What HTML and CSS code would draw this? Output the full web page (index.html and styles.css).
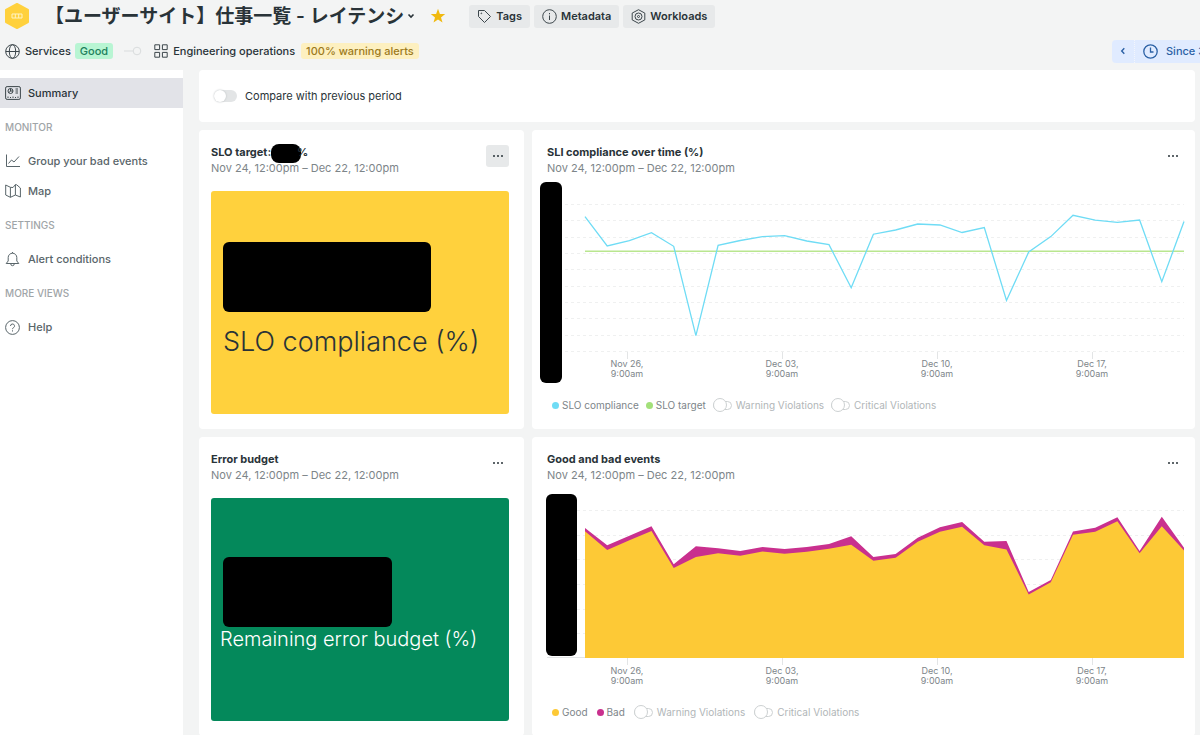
FILE: index.html
```html
<!DOCTYPE html>
<html lang="en">
<head>
    <meta charset="UTF-8">
    <meta name="viewport" content="width=device-width, initial-scale=1.0">
    <title>Service level summary</title>
    <link rel="stylesheet" href="styles.css">
</head>
<body>
    <header class="header">
        <div class="title-row">
            <svg class="logo" width="26" height="26" viewBox="0 0 26 26">
                <path d="M13 1 24 7v12l-11 6L2 19V7z" fill="#ffd13d" stroke="#ffd13d" stroke-width="2" stroke-linejoin="round"/>
                <path d="M8 11h10v4H8zM11.300 11v4M14.700 11v4" fill="none" stroke="#fff3c4"/>
            </svg>
            <h1>【ユーザーサイト】仕事一覧 - レイテンシ</h1>
            <button class="plain caret" aria-label="Open menu">
                <svg width="8" height="6" viewBox="0 0 8 6"><path d="M1.500 1.500 4 4l2.500-2.500" fill="none" stroke="#293338" stroke-width="1.600"/></svg>
            </button>
            <button class="plain star" aria-label="Favorite">
                <svg width="16" height="16" viewBox="0 0 16 16"><path d="M8 .8 9.900 5.900l5.300.2-4.200 3.300 1.500 5.200L8 11.600l-4.500 3 1.500-5.200L.8 6.100l5.300-.2z" fill="#f0b90f"/></svg>
            </button>
            <div class="chips">
                <button class="chip">
                    <svg width="15" height="15" viewBox="0 0 15 15" fill="none" stroke="#3c464b"><path d="M1.500 1.500h6l6 6-6 6-6-6z" stroke-linejoin="round"/><circle cx="4.300" cy="4.300" r=".4"/></svg>
                    Tags
                </button>
                <button class="chip">
                    <svg width="15" height="15" viewBox="0 0 15 15" fill="none" stroke="#3c464b"><circle cx="7.500" cy="7.500" r="6.800"/><path d="M7.500 6.500V11M7.500 4v1.300"/></svg>
                    Metadata
                </button>
                <button class="chip">
                    <svg width="15" height="15" viewBox="0 0 15 15" fill="none" stroke="#3c464b"><path d="m7.500.7 6.300 3.400v6.800l-6.300 3.400-6.300-3.400V4.100z" stroke-linejoin="round"/><circle cx="7.500" cy="7.500" r="3.500"/><circle cx="7.500" cy="7.500" r="1"/></svg>
                    Workloads
                </button>
            </div>
        </div>

        <div class="crumb-row">
            <a class="crumb" href="#">
                <svg width="15" height="15" viewBox="0 0 15 15" fill="none" stroke="#3c464b"><circle cx="7.500" cy="7.500" r="6.800"/><ellipse cx="7.500" cy="7.500" rx="3.200" ry="6.800"/><path d="M.7 7.500h13.600"/></svg>
                Services
            </a>
            <span class="badge good">Good</span>
            <svg class="connector" width="18" height="10" viewBox="0 0 18 10" fill="none" stroke="#d9dcdd"><path d="M0 5h9"/><circle cx="13" cy="5" r="3.800"/></svg>
            <a class="crumb" href="#">
                <svg width="14" height="14" viewBox="0 0 14 14" fill="none" stroke="#3c464b"><path d="M.8.8h4.800v4.800H.8zM8.400.8h4.800v4.800H8.400zM.8 8.400h4.800v4.800H.8zM8.400 8.400h4.800v4.800H8.400z"/></svg>
                Engineering operations
            </a>
            <span class="badge warning">100% warning alerts</span>
            <div class="time-picker">
                <button class="time-prev" aria-label="Previous period">
                    <svg width="6" height="8" viewBox="0 0 6 8"><path d="M4.300 1.200 1.700 4l2.600 2.800" fill="none" stroke="#2b61a5" stroke-width="1.400"/></svg>
                </button>
                <button class="time-range">
                    <svg width="15" height="15" viewBox="0 0 15 15" fill="none" stroke="#2b61a5" stroke-width="1.300"><circle cx="7.500" cy="7.500" r="6.700"/><path d="M7.500 3.500V8h3"/></svg>
                    Since 3
                </button>
            </div>
        </div>
    </header>

    <div class="layout">
        <nav class="sidebar">
            <a class="nav-item active" href="#">
                <svg width="16" height="14" viewBox="0 0 16 14" fill="none" stroke="#3c464b"><rect x=".6" y=".6" width="14.800" height="12.800" rx="1.500"/><circle cx="5.500" cy="5" r="2.500"/><path d="M5.500 5V2.500M5.500 5H8M5.500 5 3.800 6.800M10.500 3H13M10.500 5H13M10.500 7H13M3 12v-1.500M5.500 12v-1M8 12v-1.500M10.500 12v-1M13 12v-1.500"/></svg>
                Summary
            </a>
            <h2>MONITOR</h2>
            <a class="nav-item" href="#">
                <svg width="16" height="14" viewBox="0 0 16 14" fill="none" stroke="#59656a"><path d="M1.500.5v12H15M3.500 9.500 6.500 6l2.500 2 5-5.500"/></svg>
                Group your bad events
            </a>
            <a class="nav-item" href="#">
                <svg width="16" height="14" viewBox="0 0 16 14" fill="none" stroke="#59656a" stroke-linejoin="round"><path d="M.7 1v10l4.700 2.300 5-2.300 5 2V4l-3.700-3.200L10.400.6 8 3.500 5.400 3.300zM5.400 3.300v10M10.400.6V11"/></svg>
                Map
            </a>
            <h2>SETTINGS</h2>
            <a class="nav-item" href="#">
                <svg width="16" height="15" viewBox="0 0 16 15" fill="none" stroke="#59656a" stroke-linejoin="round"><path d="M1.200 11.500 3.200 9V5.500a4.300 4.300 0 0 1 8.600 0V9l2 2.500zM5.800 12a1.700 1.700 0 0 0 3.400 0M7.500 0v1.200"/></svg>
                Alert conditions
            </a>
            <h2>MORE VIEWS</h2>
            <a class="nav-item" href="#">
                <svg width="16" height="15" viewBox="0 0 16 15" fill="none" stroke="#59656a"><circle cx="7.500" cy="7.500" r="6.900"/><path d="M5.500 6a2 2 0 1 1 3 1.700c-.7.400-1 .7-1 1.500M7.500 10.300v1.200"/></svg>
                Help
            </a>
        </nav>

        <main class="content">
            <section class="panel compare">
                <input class="switch" type="checkbox" id="compare">
                <label for="compare">Compare with previous period</label>
            </section>

            <div class="grid">
                <section class="panel card">
                    <div class="card-head">
                        <div>
                            <h3>SLO target:<span class="redacted pill"></span>%</h3>
                            <p>Nov 24, 12:00pm – Dec 22, 12:00pm</p>
                        </div>
                        <button class="more pressed" aria-label="More options"><span></span><span></span><span></span></button>
                    </div>
                    <div class="billboard yellow">
                        <div class="redacted value"></div>
                        <div class="caption">SLO compliance (%)</div>
                    </div>
                </section>

                <section class="panel card wide">
                    <div class="card-head">
                        <div>
                            <h3>SLI compliance over time (%)</h3>
                            <p>Nov 24, 12:00pm – Dec 22, 12:00pm</p>
                        </div>
                        <button class="more" aria-label="More options"><span></span><span></span><span></span></button>
                    </div>
                    <svg class="chart" viewBox="0 0 663 205">
                        <path class="gridline" d="M33 24.500H652M33 40.500H652M33 57.500H652M33 73.500H652M33 89.500H652M33 106.500H652M33 122.500H652M33 138.500H652M33 155.500H652M33 171.500H652"/>
                        <path class="tick" d="M95.500 172v7M250.500 172v7M405.500 172v7M560.500 172v7"/>
                        <path class="target" d="M53 71.300H652"/>
                        <polyline class="compliance" points="53,36.700 75.200,66 97.400,60.700 119.500,52.700 141.700,66.300 163.900,155.700 186.100,65.300 208.300,60.500 230.500,56.600 252.600,55.700 274.800,61 297,64.700 319.200,107.700 341.400,54.200 363.600,50 385.700,44 407.900,45 430.100,52.500 452.300,47.500 474.500,120.500 496.700,72 518.800,56.600 541,35.300 563.200,40.200 585.400,42.300 607.600,40 629.800,101.700 652,41.500"/>
                        <rect x="8" y="2" width="22" height="201" rx="6"/>
                        <g class="axis">
                            <text x="95" y="187">Nov 26,</text><text x="95" y="197">9:00am</text>
                            <text x="250" y="187">Dec 03,</text><text x="250" y="197">9:00am</text>
                            <text x="405" y="187">Dec 10,</text><text x="405" y="197">9:00am</text>
                            <text x="560" y="187">Dec 17,</text><text x="560" y="197">9:00am</text>
                        </g>
                    </svg>
                    <div class="legend">
                        <span class="series blue">SLO compliance</span>
                        <span class="series green">SLO target</span>
                        <label><input class="mini-switch" type="checkbox">Warning Violations</label>
                        <label><input class="mini-switch" type="checkbox">Critical Violations</label>
                    </div>
                </section>

                <section class="panel card">
                    <div class="card-head">
                        <div>
                            <h3>Error budget</h3>
                            <p>Nov 24, 12:00pm – Dec 22, 12:00pm</p>
                        </div>
                        <button class="more" aria-label="More options"><span></span><span></span><span></span></button>
                    </div>
                    <div class="billboard dark">
                        <div class="redacted value"></div>
                        <div class="caption">Remaining error budget (%)</div>
                    </div>
                </section>

                <section class="panel card wide">
                    <div class="card-head">
                        <div>
                            <h3>Good and bad events</h3>
                            <p>Nov 24, 12:00pm – Dec 22, 12:00pm</p>
                        </div>
                        <button class="more" aria-label="More options"><span></span><span></span><span></span></button>
                    </div>
                    <svg class="chart" viewBox="0 0 663 205">
                        <path class="gridline" d="M45 20.500H652M45 45.500H652M45 69.500H652M45 94.500H652M45 119.500H652M45 143.500H652"/>
                        <path class="baseline" d="M15 167.500H652"/>
                        <path class="tick" d="M95.500 168v7M250.500 168v7M405.500 168v7M560.500 168v7"/>
                        <polygon fill="#c9308e" points="53,38 75.200,55.300 97.400,45.700 119.500,36.300 141.700,74.300 163.900,56.300 186.100,58.300 208.300,61 230.500,57 252.600,59 274.800,57 297,54 319.200,46.300 341.400,67 363.600,64 385.700,47.700 407.900,37.300 430.100,32 452.300,51.700 474.500,51 496.700,102 518.800,90 541,41.500 563.200,37.700 585.400,27.300 607.600,61 629.800,26.700 652,57.700 652,168 53,168"/>
                        <polygon fill="#fdc936" points="53,41.300 75.200,60 97.400,50.300 119.500,41 141.700,78 163.900,67 186.100,63.300 208.300,65.700 230.500,61.500 252.600,63.700 274.800,61.700 297,58.700 319.200,54.700 341.400,70.700 363.600,67.700 385.700,51.700 407.900,41.700 430.100,36.700 452.300,55.300 474.500,59.500 496.700,104.500 518.800,92.300 541,44.700 563.200,41.700 585.400,31.300 607.600,63.300 629.800,36.300 652,60.500 652,168 53,168"/>
                        <rect x="14" y="4" width="31" height="162" rx="6"/>
                        <g class="axis">
                            <text x="95" y="184">Nov 26,</text><text x="95" y="194">9:00am</text>
                            <text x="250" y="184">Dec 03,</text><text x="250" y="194">9:00am</text>
                            <text x="405" y="184">Dec 10,</text><text x="405" y="194">9:00am</text>
                            <text x="560" y="184">Dec 17,</text><text x="560" y="194">9:00am</text>
                        </g>
                    </svg>
                    <div class="legend">
                        <span class="series yellow">Good</span>
                        <span class="series pink">Bad</span>
                        <label><input class="mini-switch" type="checkbox">Warning Violations</label>
                        <label><input class="mini-switch" type="checkbox">Critical Violations</label>
                    </div>
                </section>
            </div>
        </main>
    </div>
</body>
</html>
```

FILE: styles.css
```css
* {
    box-sizing: border-box;
}

body {
    display: flex;
    flex-direction: column;
    height: 100vh;
    margin: 0;
    overflow: hidden;
    background-color: #f3f4f4;
    color: #293338;
    font-family: Inter, "Noto Sans CJK JP", sans-serif;
    font-size: 11px;
}

h1, h2, h3, p {
    margin: 0;
}

svg {
    flex-shrink: 0;
}

button {
    border: 0;
    padding: 0;
    font: inherit;
    color: inherit;
    cursor: pointer;
}

a {
    color: inherit;
    text-decoration: none;
}

/* Header */
.title-row {
    display: flex;
    align-items: center;
    height: 32px;
    padding-left: 4px;
}

.title-row h1 {
    margin-left: 15px;
    padding-top: 1px;
    font-size: 19px;
    line-height: 28px;
    font-weight: 600;
    white-space: nowrap;
}

.plain {
    display: flex;
    background: none;
}

.caret {
    margin-left: 3px;
}

.star {
    margin-left: 15px;
}

.chips {
    display: flex;
    gap: 4px;
    margin-left: 23px;
}

.chip {
    display: flex;
    align-items: center;
    gap: 4px;
    height: 23px;
    padding: 0 8px;
    border-radius: 3px;
    background-color: #e7e9ea;
    font-weight: 600;
}

.crumb-row {
    display: flex;
    align-items: center;
    height: 38px;
    padding-left: 5px;
    white-space: nowrap;
}

.crumb {
    display: flex;
    align-items: center;
    gap: 5px;
    font-weight: 500;
}

.badge {
    margin-left: 4px;
    padding: 0 5px;
    border-radius: 3px;
    line-height: 16px;
    font-weight: 500;
}

.good {
    background-color: #b8f5d3;
    color: #20805c;
}

.warning {
    margin-left: 6px;
    background-color: #fdf0c0;
    color: #9c7a1c;
}

.connector {
    margin: 0 12px 0 11px;
}

.time-picker {
    display: flex;
    width: 88px;
    height: 23px;
    margin-left: auto;
    overflow: hidden;
    border-radius: 4px 0 0 4px;
    background-color: #e0ebff;
    color: #2b61a5;
    font-weight: 500;
}

.time-picker button {
    display: flex;
    flex-shrink: 0;
    align-items: center;
    background: none;
}

.time-prev {
    width: 23px;
    justify-content: center;
    border-right: 1px dotted #f3f6fc;
}

.time-range {
    gap: 8px;
    padding-left: 8px;
}

/* Sidebar */
.layout {
    display: flex;
    flex: 1;
    min-height: 0;
}

.sidebar {
    flex: 0 0 183px;
    padding-top: 8px;
    background-color: #fff;
}

.sidebar h2 {
    padding-left: 5px;
    color: #9fa5a8;
    font-size: 10px;
    line-height: 38px;
    font-weight: 500;
}

.nav-item {
    display: flex;
    align-items: center;
    gap: 7px;
    height: 30px;
    padding-left: 5px;
    color: #59656a;
    font-weight: 500;
}

.nav-item.active {
    background-color: #e2e3e8;
    color: #293338;
}

/* Content */
.content {
    flex: 1;
    min-width: 0;
    padding: 0 5px 0 16px;
}

.panel {
    border-radius: 4px;
    background-color: #fff;
}

.compare {
    display: flex;
    align-items: center;
    gap: 8px;
    height: 52px;
    margin-bottom: 8px;
    padding-left: 15px;
}

.switch {
    appearance: none;
    display: flex;
    width: 23px;
    height: 12px;
    margin: 0;
    border-radius: 6px;
    background-color: #e3e5e6;
}

.switch::before {
    content: "";
    width: 12px;
    height: 12px;
    border-radius: 50%;
    background-color: #fff;
    box-shadow: 0 0 2px #b5babc;
}

.grid {
    display: grid;
    grid-template-columns: 325px minmax(0, 1fr);
    gap: 8px;
}

.card {
    min-height: 299px;
    padding: 15px 15px 15px 12px;
}

.card.wide {
    padding: 15px 0 12px;
}

.card-head {
    display: flex;
    justify-content: space-between;
    height: 31px;
}

.wide .card-head {
    padding: 0 11px 0 15px;
}

.card-head h3 {
    height: 15px;
    font-size: 11px;
    line-height: 15px;
    font-weight: 700;
}

.card-head p {
    color: #7d8589;
    font-size: 11px;
    line-height: 16px;
}

.redacted {
    background-color: #000;
}

.pill {
    display: inline-block;
    width: 30px;
    height: 19px;
    margin: -2px -4px -2px 0;
    border-radius: 8px;
    vertical-align: middle;
}

.more {
    display: flex;
    align-items: center;
    justify-content: center;
    gap: 2px;
    width: 23px;
    height: 22px;
    border-radius: 3px;
    background: none;
}

.more.pressed {
    background-color: #e7e9ea;
}

.more span {
    width: 2px;
    height: 2px;
    border-radius: 50%;
    background-color: #293338;
}

.billboard {
    height: 223px;
    margin-top: 15px;
    border-radius: 3px;
}

.billboard.yellow {
    padding: 51px 12px 0;
    background-color: #ffd13d;
    font-size: 27px;
    line-height: 60px;
}

.billboard.dark {
    padding: 59px 9px 0;
    background-color: #04895b;
    color: #fff;
    font-size: 20px;
    line-height: 25px;
}

.billboard .value {
    width: 208px;
    height: 70px;
    border-radius: 6px;
}

.dark .value {
    width: 169px;
    margin-left: 3px;
}

.caption {
    font-weight: 350;
    white-space: nowrap;
}

/* Charts */
.chart {
    display: block;
    width: 100%;
    margin-top: 4px;
}

.wide:last-child .chart {
    margin-top: 7px;
}

.gridline {
    fill: none;
    stroke: #eff0f0;
    stroke-dasharray: 3 3;
}

.tick, .baseline {
    fill: none;
    stroke: #e3e5e6;
}

.target {
    stroke: #b9e68f;
    stroke-width: 1.5;
}

.compliance {
    fill: none;
    stroke: #6fdcf5;
    stroke-width: 1.3;
}

.axis {
    fill: #7d8589;
    font-size: 9px;
    text-anchor: middle;
}

.legend {
    display: flex;
    align-items: center;
    gap: 7px;
    margin-top: 12px;
    padding-left: 20px;
    color: #7d8589;
    font-size: 10px;
    line-height: 16px;
}

.wide:last-child .legend {
    gap: 9px;
    margin-top: 9px;
}

.series {
    display: flex;
    align-items: center;
    gap: 3px;
}

.series::before {
    content: "";
    width: 7px;
    height: 7px;
    border-radius: 50%;
}

.blue::before {
    background-color: #6fdcf5;
}

.green::before {
    background-color: #a3e07a;
}

.yellow::before {
    background-color: #fdc936;
}

.pink::before {
    background-color: #c9308e;
}

.legend label {
    display: flex;
    align-items: center;
    gap: 4px;
    color: #b1b6b8;
}

.mini-switch {
    appearance: none;
    display: flex;
    align-items: center;
    width: 19px;
    height: 9px;
    margin: 0;
    border: 1px solid #cdd1d2;
    border-radius: 5px;
}

.mini-switch::before {
    content: "";
    flex-shrink: 0;
    width: 12px;
    height: 12px;
    margin-left: -1px;
    border: 1px solid #cdd1d2;
    border-radius: 50%;
    background-color: #fff;
}
```
